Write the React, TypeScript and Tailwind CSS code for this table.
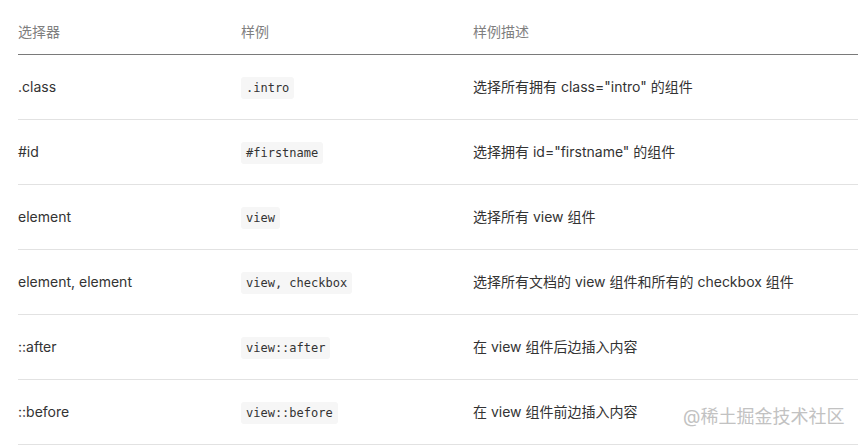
// Chinese text written as \u escapes so the file stays plain ASCII
const rows = [
  { sel: ".class", code: ".intro", desc: "\u9009\u62e9\u6240\u6709\u62e5\u6709 class=\"intro\" \u7684\u7ec4\u4ef6" },
  { sel: "#id", code: "#firstname", desc: "\u9009\u62e9\u62e5\u6709 id=\"firstname\" \u7684\u7ec4\u4ef6" },
  { sel: "element", code: "view", desc: "\u9009\u62e9\u6240\u6709 view \u7ec4\u4ef6" },
  {
    sel: "element, element",
    code: "view, checkbox",
    desc: "\u9009\u62e9\u6240\u6709\u6587\u6863\u7684 view \u7ec4\u4ef6\u548c\u6240\u6709\u7684 checkbox \u7ec4\u4ef6",
  },
  { sel: "::after", code: "view::after", desc: "\u5728 view \u7ec4\u4ef6\u540e\u8fb9\u63d2\u5165\u5185\u5bb9" },
  { sel: "::before", code: "view::before", desc: "\u5728 view \u7ec4\u4ef6\u524d\u8fb9\u63d2\u5165\u5185\u5bb9" },
];

export default function App() {
  return (
    <div
      className="relative w-[858px] h-[445px] overflow-hidden bg-white pl-[18px] text-[14px] text-[#333]"
      style={{ fontFamily: 'Inter, "Noto Sans CJK SC", sans-serif' }}
    >
      {/* header */}
      <div className="flex h-[55px] items-end border-b border-[#7a7a7a] pb-[12px] text-[#7f7f7f]">
        <div className="w-[223px] shrink-0 leading-[20px]">{"\u9009\u62e9\u5668"}</div>
        <div className="w-[232px] shrink-0 leading-[20px]">{"\u6837\u4f8b"}</div>
        <div className="whitespace-nowrap leading-[20px]">{"\u6837\u4f8b\u63cf\u8ff0"}</div>
      </div>

      {rows.map((r) => (
        <div key={r.sel} className="flex h-[65px] items-center border-b border-[#e2e2e2]">
          <div className="w-[223px] shrink-0 leading-[20px]">{r.sel}</div>
          <div className="w-[232px] shrink-0">
            <span
              className="inline-block whitespace-nowrap rounded-[3px] bg-[#f6f6f6] px-[5px] py-[3px] text-[12px] leading-[16px] text-[#333]"
              style={{ fontFamily: '"DejaVu Sans Mono", monospace' }}
            >
              {r.code}
            </span>
          </div>
          <div className="whitespace-nowrap leading-[20px]">{r.desc}</div>
        </div>
      ))}

      {/* watermark */}
      <div className="absolute left-[683px] top-[405px] whitespace-nowrap text-[18px] leading-[24px] text-[#c2c2c2]">
        {"@\u7a00\u571f\u6398\u91d1\u6280\u672f\u793e\u533a"}
      </div>
    </div>
  );
}
